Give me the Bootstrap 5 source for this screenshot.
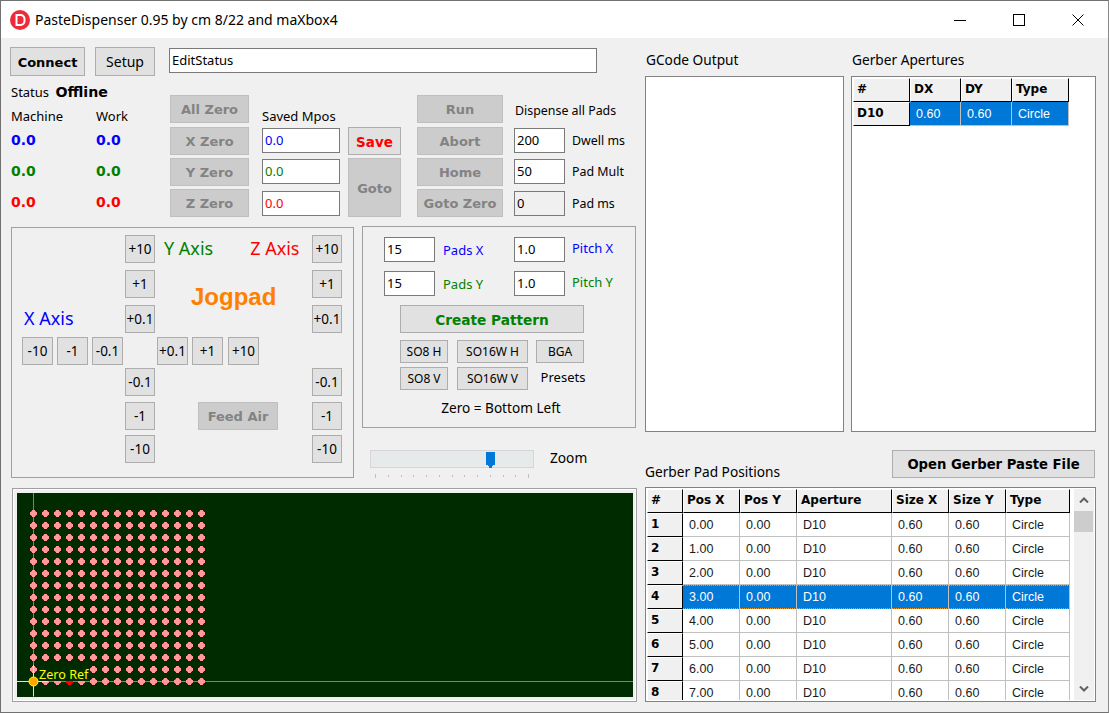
<!DOCTYPE html>
<html lang="en">

<head>
  <meta charset="UTF-8" />
  <title>PasteDispenser</title>
  <link href="https://cdn.jsdelivr.net/npm/bootstrap@5.3.0/dist/css/bootstrap.min.css" rel="stylesheet" />
  <style>
    html, body { height: 100%; }
    body {
      background: #f0f0f0;
      color: #000;
      font-family: "Noto Sans", sans-serif;
      font-size: 13px;
      line-height: 16px;
      overflow: hidden;
    }

    .app-window {
      width: 1109px;
      height: 713px;
      border: 1px solid #717171;
      border-right-color: #8a8a8a;
      display: flex;
      flex-direction: column;
    }

    .title-strip {
      height: 37px;
      flex: none;
      background: #fff;
      padding: 0 1px 0 9px;
      font-size: 14px;
    }
    .title-icon { margin-right: 5px; }
    .win-btn {
      width: 59px;
      height: 37px;
      display: flex;
      align-items: center;
      justify-content: center;
    }

    .app-body { padding: 9px 12px 0 9px; flex: 1; min-height: 0; }
    .left-side { width: 628px; flex: none; }
    .right-side { width: 451px; margin-left: 7px; flex: none; }

    .ctl-btn {
      --bs-btn-padding-x: 0;
      --bs-btn-padding-y: 0;
      --bs-btn-font-size: 13px;
      --bs-btn-line-height: 16px;
      --bs-btn-border-radius: 0;
      --bs-btn-border-width: 1px;
      --bs-btn-border-color: #adadad;
      --bs-btn-bg: #e1e1e1;
      --bs-btn-color: #000;
      --bs-btn-hover-bg: #e1e1e1;
      --bs-btn-hover-color: #000;
      --bs-btn-hover-border-color: #adadad;
      height: 28px;
      flex: none;
      white-space: nowrap;
    }
    .ctl-btn:disabled {
      --bs-btn-disabled-bg: #cccccc;
      --bs-btn-disabled-border-color: #bfbfbf;
      --bs-btn-disabled-color: #838383;
      --bs-btn-disabled-opacity: 1;
    }
    .bold-face {
      font-family: "DejaVu Sans", sans-serif;
      font-weight: 700;
      font-size: 13px;
    }
    .btn.bold-face { padding-top: 2px; }
    .btn-connect { width: 75px; height: 29px; }
    .btn-setup { width: 60px; height: 29px; margin-left: 10px; font-size: 14px; }
    .btn-zero { width: 79px; }
    .btn-save { width: 53px; --bs-btn-color: #ff0000; --bs-btn-hover-color: #ff0000; font-size: 13.5px; }
    .btn-goto { width: 53px; height: 59px; }
    .btn-run { width: 86px; }
    .btn-jog { width: 31px; font-size: 13.5px; }
    .btn-jog-v { width: 30px; font-size: 13.5px; }
    .btn-jog-far { margin-left: 1px; }
    .btn-jog-low { margin-top: -1px; }
    .btn-feed { width: 80px; }
    .btn-create { width: 184px; --bs-btn-color: #008000; --bs-btn-hover-color: #008000; font-size: 13.7px; }
    .btn-preset { height: 23px; font-size: 12px; }
    .w-so8 { width: 48px; }
    .w-so16 { width: 71px; }
    .btn-bga { margin-left: -1px; }
    .btn-open { width: 203px; margin-right: 1px; font-size: 13.2px; }

    .ctl-input {
      display: block;
      height: 25px;
      border: 1px solid #7a7a7a;
      border-radius: 0;
      background: #fff;
      padding: 0 2px 2px 2px;
      font-size: 13px;
      line-height: 16px;
      color: #000;
      box-shadow: none;
    }
    .ctl-input.is-grey { background: #f0f0f0; }
    .input-status { width: 428px; margin: 1px 0 0 14px; }
    .input-mpos { width: 78px; }
    .input-small { width: 51px; }

    .lbl-blue { color: #0000ff; }
    .lbl-green { color: #008000; }
    .lbl-red { color: #ff0000; }

    .top-grid { margin-top: 19px; height: 123px; }
    .status-col { width: 160px; flex: none; padding-left: 1px; }
    .status-line { height: 18px; margin-top: -11px; }
    .status-line b { font-size: 14.2px; margin-left: 3px; }
    .pos-head { margin-top: 6px; }
    .pos-head span:first-child, .pos-row span:first-child { display: inline-block; width: 85px; }
    .pos-row { font-family: "DejaVu Sans", sans-serif; font-weight: 700; font-size: 14px; margin-top: 15px; }
    .pos-head + .pos-row { margin-top: 8px; }

    .col-zero { width: 79px; flex: none; gap: 3px; }
    .col-mpos { width: 78px; margin-left: 13px; flex: none; }
    .lbl-mpos { height: 20px; margin-top: 13px; }
    .input-stack { gap: 6px; }
    .input-stack input:last-child { margin-top: 1px; }
    .col-save { width: 53px; margin-left: 8px; flex: none; padding-top: 32px; gap: 3px; }
    .col-run { width: 86px; margin-left: 16px; flex: none; gap: 3px; }
    .col-zero .btn:nth-child(2), .col-run .btn:nth-child(2) { margin-top: 1px; }
    .col-disp { margin-left: 11px; flex: none; font-size: 12.4px; }
    .disp-head { margin: 8px 0 9px 1px; height: 16px; }
    .disp-row { height: 25px; }
    .disp-row + .disp-row { margin-top: 6px; }
    .disp-row:last-child { margin-top: 7px; }
    .disp-row span { margin-left: 7px; }

    .mid-band { margin: 8px 0 0 1px; gap: 8px; height: 252px; }
    .group-box { border: 1px solid #a0a0a0; }
    .jog-box { width: 343px; height: 251px; margin-top: 1px; flex: none; padding: 7px 0 0 10px; }
    .jog-top { height: 98px; }
    .x-area { width: 103px; flex: none; padding: 0 0 5px 2px; display: flex; align-items: flex-end; }
    .jog-col { width: 30px; flex: none; gap: 7px; }
    .jog-col-b { gap: 6px; }
    .jog-gap { width: 157px; flex: none; }
    .axis-name { font-size: 18px; line-height: 20px; }
    .axis-row { padding-top: 3px; }
    .axis-y { color: #008000; margin-left: 9px; }
    .axis-z { color: #ff0000; margin-left: 37px; }
    .axis-x { color: #0000ff; }
    .jog-word {
      color: #ff8000;
      font-family: "Liberation Sans", sans-serif;
      font-weight: 700;
      font-size: 24px;
      line-height: 26px;
      margin: 26px 0 0 36px;
    }
    .jog-mid { margin-top: 4px; height: 28px; gap: 4px; }
    .jog-spacer { width: 26px; flex: none; }
    .jog-bot { margin-top: 3px; }
    .feed-area { padding: 34px 0 0 43px; }

    .pat-stack { height: 251px; flex: none; }
    .pat-box { width: 274px; height: 202px; padding: 10px 0 0 21px; }
    .zoom-band { height: 49px; padding: 22px 0 0 8px; }
    .pat-row { height: 25px; }
    .pat-row + .pat-row { margin-top: 9px; }
    .pat-lbl { width: 71px; margin-left: 8px; flex: none; }
    .pitch-lbl { margin: 0 0 3px 7px; }
    .create-row { margin: 9px 0 0 16px; }
    .preset-row { margin: 7px 0 0 16px; gap: 9px; height: 23px; }
    .preset-row + .preset-row { margin-top: 4px; }
    .presets-lbl { width: 48px; margin-left: 2px; padding-top: 2px; text-align: center; flex: none; }
    .pat-foot { margin-top: 10px; text-align: center; width: 234px; font-size: 13.6px; }

    .slider-wrap { width: 164px; height: 36px; flex: none; }
    .zoom-lbl { margin-left: 16px; font-size: 13.7px; }

    .pcb-frame {
      width: 625px;
      height: 214px;
      margin: 10px 0 0 2px;
      background: #f0f0f0;
      border: 1px solid #a0a0a0;
      box-shadow: inset 0 0 0 1px #fff;
      padding: 4px;
    }
    .pcb-frame svg { display: block; }
    .pcb-text { font-family: "Noto Sans", sans-serif; font-size: 12.6px; }

    .list-pair { height: 356px; gap: 7px; }
    .lbl-top { height: 24px; margin-top: 5px; font-size: 13.7px; }
    .gcode-lbl { width: 207px; padding-left: 1px; }
    .sunk-box { background: #fff; border: 1px solid #828282; }
    .gcode-box { width: 199px; height: 356px; }
    .aper-box { width: 245px; height: 356px; padding: 1px; }

    .grid-table {
      --bs-table-bg: transparent;
      margin: 0;
      width: auto;
      table-layout: fixed;
      border-collapse: separate;
      border-spacing: 0;
      font-family: "Liberation Sans", sans-serif;
      font-size: 12.5px;
      line-height: 16px;
    }
    .grid-table th, .grid-table td {
      height: 24px;
      padding: 0 0 0 6px;
      border: 0;
      border-right: 1px solid #c0c0c0;
      border-bottom: 1px solid #c0c0c0;
      white-space: nowrap;
      overflow: hidden;
      font-weight: 400;
      vertical-align: middle;
      color: #1a1a1a;
    }
    .grid-table th {
      background: #f0f0f0;
      color: #000;
      font-family: "DejaVu Sans", sans-serif;
      font-weight: 700;
      font-size: 12px;
      padding: 0 0 2px 3px;
      border-top: 1px solid #fff;
      border-left: 1px solid #fff;
      border-right: 1px solid #000;
      border-bottom: 1px solid #000;
    }
    .grid-table tr.row-on td, .grid-table td.cell-on {
      --bs-table-accent-bg: transparent;
      background: #0078d7;
      color: #fff;
    }
    .grid-table tr.row-on td {
      border-top: 1px dotted #f09a3e;
      border-bottom: 1px dotted #f09a3e;
    }

    .pads-head { height: 37px; margin-top: 18px; }
    .lbl-pads { padding-top: 14px; font-size: 13.7px; }
    .pads-box { width: 451px; height: 215px; padding: 1px; overflow: hidden; }
    .pads-scroll { height: 211px; overflow: hidden; width: 424px; flex: none; }
    .scroll-rail { width: 20px; margin-left: 3px; flex: none; background: #f0f0f0; }
    .scroll-thumb { width: 19px; height: 21px; background: #cdcdcd; }
    .scroll-arrow { height: 22px; width: 19px; display: flex; align-items: center; justify-content: center; flex: none; }
  </style>
</head>

<body>
  <div class="app-window">
    <div class="title-strip d-flex align-items-center">
      <svg class="title-icon" width="20" height="20" viewBox="0 0 20 20">
        <circle cx="10" cy="10" r="10" fill="#ee2b3b" />
        <path d="M6.5 5h4.2a3.8 3.8 0 0 1 3.8 3.8v2.4a3.8 3.8 0 0 1-3.8 3.8H6.5z" fill="none" stroke="#fff" stroke-width="2" />
      </svg>
      <span>PasteDispenser 0.95 by cm 8/22 and maXbox4</span>
      <div class="d-flex ms-auto">
        <div class="win-btn">
          <svg width="12" height="12"><path d="M0 6.5h12" stroke="#000" /></svg>
        </div>
        <div class="win-btn">
          <svg width="12" height="12"><rect x=".5" y=".5" width="11" height="11" fill="none" stroke="#000" /></svg>
        </div>
        <div class="win-btn">
          <svg width="12" height="12"><path d="M.5.5l11 11M11.5.5l-11 11" stroke="#000" /></svg>
        </div>
      </div>
    </div>

    <div class="app-body d-flex">
      <div class="left-side">
        <div class="d-flex align-items-start">
          <button class="btn ctl-btn btn-connect bold-face">Connect</button>
          <button class="btn ctl-btn btn-setup">Setup</button>
          <input class="ctl-input input-status" value="EditStatus">
        </div>

        <div class="top-grid d-flex">
          <div class="status-col">
            <div class="status-line">Status <b class="bold-face">Offline</b></div>
            <div class="pos-head"><span>Machine</span><span>Work</span></div>
            <div class="pos-row lbl-blue"><span>0.0</span><span>0.0</span></div>
            <div class="pos-row lbl-green"><span>0.0</span><span>0.0</span></div>
            <div class="pos-row lbl-red"><span>0.0</span><span>0.0</span></div>
          </div>
          <div class="col-zero d-flex flex-column">
            <button class="btn ctl-btn btn-zero bold-face" disabled>All Zero</button>
            <button class="btn ctl-btn btn-zero bold-face" disabled>X Zero</button>
            <button class="btn ctl-btn btn-zero bold-face" disabled>Y Zero</button>
            <button class="btn ctl-btn btn-zero bold-face" disabled>Z Zero</button>
          </div>
          <div class="col-mpos">
            <div class="lbl-mpos">Saved Mpos</div>
            <div class="d-flex flex-column input-stack">
              <input class="ctl-input input-mpos lbl-blue" value="0.0">
              <input class="ctl-input input-mpos lbl-green" value="0.0">
              <input class="ctl-input input-mpos lbl-red" value="0.0">
            </div>
          </div>
          <div class="col-save d-flex flex-column">
            <button class="btn ctl-btn bold-face btn-save">Save</button>
            <button class="btn ctl-btn btn-goto bold-face" disabled>Goto</button>
          </div>
          <div class="col-run d-flex flex-column">
            <button class="btn ctl-btn btn-run bold-face" disabled>Run</button>
            <button class="btn ctl-btn btn-run bold-face" disabled>Abort</button>
            <button class="btn ctl-btn btn-run bold-face" disabled>Home</button>
            <button class="btn ctl-btn btn-run bold-face" disabled>Goto Zero</button>
          </div>
          <div class="col-disp">
            <div class="disp-head">Dispense all Pads</div>
            <div class="disp-row d-flex align-items-center"><input class="ctl-input input-small" value="200"><span>Dwell ms</span></div>
            <div class="disp-row d-flex align-items-center"><input class="ctl-input input-small" value="50"><span>Pad Mult</span></div>
            <div class="disp-row d-flex align-items-center"><input class="ctl-input input-small is-grey" value="0" readonly><span>Pad ms</span></div>
          </div>
        </div>

        <div class="mid-band d-flex">
          <div class="group-box jog-box">
            <div class="jog-top d-flex">
              <div class="x-area"><span class="axis-name axis-x">X Axis</span></div>
              <div class="jog-col d-flex flex-column">
                <button class="btn ctl-btn btn-jog-v">+10</button>
                <button class="btn ctl-btn btn-jog-v">+1</button>
                <button class="btn ctl-btn btn-jog-v">+0.1</button>
              </div>
              <div class="jog-gap">
                <div class="d-flex axis-row"><span class="axis-name axis-y">Y Axis</span><span class="axis-name axis-z">Z Axis</span></div>
                <div class="jog-word">Jogpad</div>
              </div>
              <div class="jog-col d-flex flex-column">
                <button class="btn ctl-btn btn-jog-v">+10</button>
                <button class="btn ctl-btn btn-jog-v">+1</button>
                <button class="btn ctl-btn btn-jog-v">+0.1</button>
              </div>
            </div>
            <div class="jog-mid d-flex">
              <button class="btn ctl-btn btn-jog">-10</button>
              <button class="btn ctl-btn btn-jog">-1</button>
              <button class="btn ctl-btn btn-jog">-0.1</button>
              <div class="jog-spacer"></div>
              <button class="btn ctl-btn btn-jog">+0.1</button>
              <button class="btn ctl-btn btn-jog">+1</button>
              <button class="btn ctl-btn btn-jog btn-jog-far">+10</button>
            </div>
            <div class="jog-bot d-flex">
              <div class="x-area"></div>
              <div class="jog-col jog-col-b d-flex flex-column">
                <button class="btn ctl-btn btn-jog-v">-0.1</button>
                <button class="btn ctl-btn btn-jog-v">-1</button>
                <button class="btn ctl-btn btn-jog-v btn-jog-low">-10</button>
              </div>
              <div class="jog-gap feed-area">
                <button class="btn ctl-btn btn-feed bold-face" disabled>Feed Air</button>
              </div>
              <div class="jog-col jog-col-b d-flex flex-column">
                <button class="btn ctl-btn btn-jog-v">-0.1</button>
                <button class="btn ctl-btn btn-jog-v">-1</button>
                <button class="btn ctl-btn btn-jog-v btn-jog-low">-10</button>
              </div>
            </div>
          </div>

          <div class="pat-stack">
            <div class="group-box pat-box">
              <div class="pat-row d-flex align-items-center">
                <input class="ctl-input input-small" value="15"><span class="pat-lbl lbl-blue">Pads X</span>
                <input class="ctl-input input-small" value="1.0"><span class="lbl-blue pitch-lbl">Pitch X</span>
              </div>
              <div class="pat-row d-flex align-items-center">
                <input class="ctl-input input-small" value="15"><span class="pat-lbl lbl-green">Pads Y</span>
                <input class="ctl-input input-small" value="1.0"><span class="lbl-green pitch-lbl">Pitch Y</span>
              </div>
              <div class="create-row"><button class="btn ctl-btn btn-create bold-face">Create Pattern</button></div>
              <div class="preset-row d-flex">
                <button class="btn ctl-btn btn-preset w-so8">SO8 H</button>
                <button class="btn ctl-btn btn-preset w-so16">SO16W H</button>
                <button class="btn ctl-btn btn-preset w-so8 btn-bga">BGA</button>
              </div>
              <div class="preset-row d-flex">
                <button class="btn ctl-btn btn-preset w-so8">SO8 V</button>
                <button class="btn ctl-btn btn-preset w-so16">SO16W V</button>
                <span class="presets-lbl">Presets</span>
              </div>
              <div class="pat-foot">Zero = Bottom Left</div>
            </div>
            <div class="zoom-band d-flex">
              <svg class="slider-wrap" viewBox="0 0 164 36">
                <rect x=".5" y=".5" width="163" height="17" fill="#e7eaea" stroke="#d6d6d6" />
                <path d="M116 2h9v13h-2v1h-1v2h-3v-2h-1v-1h-2z" fill="#0078d7" />
                <path d="M5.5 24v4M18.5 25v2M31.5 25v2M43.5 25v2M56.5 25v2M69.5 25v2M82.5 25v2M94.5 25v2M107.5 25v2M120.5 25v2M133.5 25v2M145.5 25v2M158.5 24v4" stroke="#c0c0c0" />
              </svg>
              <div class="zoom-lbl">Zoom</div>
            </div>
          </div>
        </div>

        <div class="pcb-frame">
          <svg id="pcb" width="616" height="204" viewBox="0 0 616 204" shape-rendering="crispEdges"></svg>
        </div>
      </div>

      <div class="right-side">
        <div class="d-flex lbl-top"><div class="gcode-lbl">GCode Output</div><div>Gerber Apertures</div></div>
        <div class="list-pair d-flex">
          <div class="sunk-box gcode-box"></div>
          <div class="sunk-box aper-box">
            <table class="table grid-table">
              <colgroup><col width="57"><col width="51"><col width="51"><col width="57"></colgroup>
              <tr><th>#</th><th>DX</th><th>DY</th><th>Type</th></tr>
              <tr><th>D10</th><td class="cell-on">0.60</td><td class="cell-on">0.60</td><td class="cell-on">Circle</td></tr>
            </table>
          </div>
        </div>

        <div class="pads-head d-flex">
          <div class="lbl-pads">Gerber Pad Positions</div>
          <button class="btn ctl-btn btn-open bold-face ms-auto">Open Gerber Paste File</button>
        </div>
        <div class="sunk-box pads-box d-flex">
          <div class="pads-scroll">
            <table class="table grid-table" id="padTable">
              <colgroup><col width="36"><col width="57"><col width="57"><col width="95"><col width="57"><col width="57"><col width="64"></colgroup>
              <tr><th>#</th><th>Pos X</th><th>Pos Y</th><th>Aperture</th><th>Size X</th><th>Size Y</th><th>Type</th></tr>
            </table>
          </div>
          <div class="scroll-rail d-flex flex-column">
            <div class="scroll-arrow"><svg width="10" height="6"><path d="M1 5.5l4-4 4 4" fill="none" stroke="#606060" stroke-width="2" /></svg></div>
            <div class="scroll-thumb"></div>
            <div class="scroll-arrow mt-auto"><svg width="10" height="6"><path d="M1 .5l4 4 4-4" fill="none" stroke="#606060" stroke-width="2" /></svg></div>
          </div>
        </div>
      </div>
    </div>
  </div>

  <script>
    // pad table rows
    const padTable = document.getElementById('padTable');
    for (let i = 0; i < 8; i++) {
      const row = document.createElement('tr');
      if (i === 3) row.className = 'row-on';
      row.innerHTML = `<th>${i + 1}</th><td>${i}.00</td><td>0.00</td><td>D10</td><td>0.60</td><td>0.60</td><td>Circle</td>`;
      padTable.appendChild(row);
    }

    // pcb view, origin of the drawing is the inner corner of the frame
    let svg = '<rect width="616" height="204" fill="#002a00"/>';
    svg += '<path d="M16.5 0v204M0 188.5h616" stroke="#808080" fill="none"/>';
    for (let y = 0; y < 15; y++) {
      for (let x = 0; x < 15; x++) {
        const cx = 16 + x * 12, cy = 20 + y * 12;
        const selected = y === 14 && x === 3; // pad 4 of the list
        // soft corners first, then the plus shape over them
        svg += `<rect x="${cx - 2}" y="${cy - 2}" width="5" height="5" fill="${selected ? '#c00000' : '#c97a7a'}"/>`;
        svg += `<path d="M${cx - 1} ${cy - 3}h3v2h2v3h-2v2h-3v-2h-2v-3h2z" fill="${selected ? '#ff0000' : '#ff9999'}"/>`;
      }
    }
    svg += '<rect x="22" y="173" width="50" height="15" fill="#002a00"/>';
    svg += '<path d="M0 188.5h31M16.5 172v31" stroke="#ffff00" fill="none"/>';
    svg += '<circle cx="16.5" cy="188.5" r="4.5" fill="#ffa500" stroke="#ffff00" shape-rendering="auto"/>';
    svg += '<text x="22" y="186" fill="#ffff00" class="pcb-text" shape-rendering="auto">Zero Ref</text>';
    document.getElementById('pcb').innerHTML = svg;
  </script>
  <script src="https://cdn.jsdelivr.net/npm/bootstrap@5.3.0/dist/js/bootstrap.bundle.min.js"></script>
</body>

</html>
